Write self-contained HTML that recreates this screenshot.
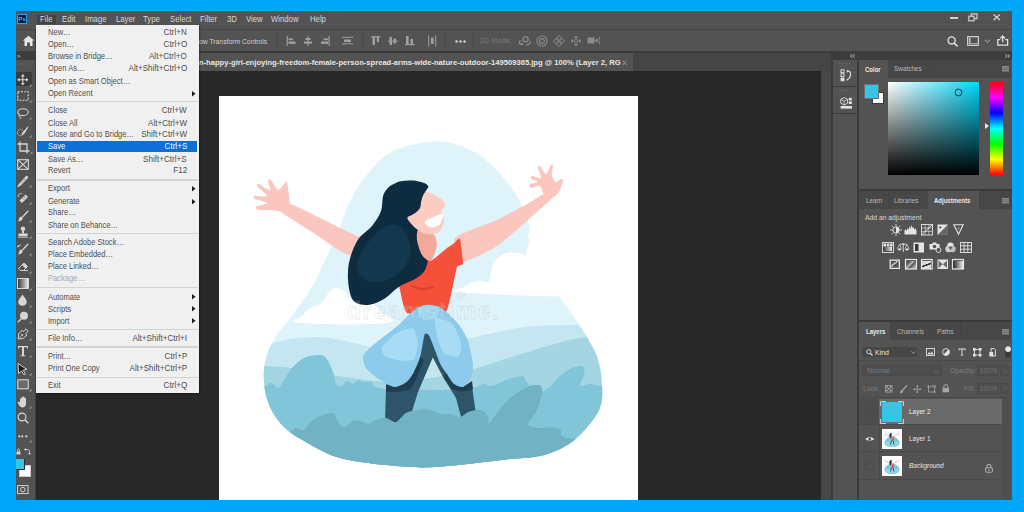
<!DOCTYPE html>
<html><head><meta charset="utf-8">
<style>
*{margin:0;padding:0;box-sizing:border-box}
html,body{width:1024px;height:512px;overflow:hidden;background:#00a7f8;font-family:"Liberation Sans",sans-serif;position:relative}
.a{position:absolute}
.t{position:absolute;white-space:nowrap}
svg{overflow:visible}
</style></head><body>
<div class="a" style="left:16.00px;top:11.00px;width:995.50px;height:489.20px;background:#535353;"></div>
<div class="a" style="left:16.00px;top:28.60px;width:995.50px;height:1.00px;background:#464646;"></div>
<div class="a" style="left:16.80px;top:14.40px;width:10.00px;height:9.40px;background:#001e36;border:1px solid #2f9fe8;"></div>
<div class="t" style="top:16.00px;font-size:6.2px;line-height:6.2px;color:#45b0f5;font-weight:700;left:18.20px;">Ps</div>
<div class="a" style="left:36.60px;top:14.70px;width:19.30px;height:9.80px;background:#444444;"></div>
<div class="t" style="top:15.00px;font-size:8.6px;line-height:8.6px;color:#d8d8d8;left:39.80px;transform:scaleX(0.9);transform-origin:left center;">File</div>
<div class="t" style="top:15.00px;font-size:8.6px;line-height:8.6px;color:#d8d8d8;left:61.70px;transform:scaleX(0.9);transform-origin:left center;">Edit</div>
<div class="t" style="top:15.00px;font-size:8.6px;line-height:8.6px;color:#d8d8d8;left:84.60px;transform:scaleX(0.9);transform-origin:left center;">Image</div>
<div class="t" style="top:15.00px;font-size:8.6px;line-height:8.6px;color:#d8d8d8;left:115.60px;transform:scaleX(0.9);transform-origin:left center;">Layer</div>
<div class="t" style="top:15.00px;font-size:8.6px;line-height:8.6px;color:#d8d8d8;left:143.40px;transform:scaleX(0.9);transform-origin:left center;">Type</div>
<div class="t" style="top:15.00px;font-size:8.6px;line-height:8.6px;color:#d8d8d8;left:169.60px;transform:scaleX(0.9);transform-origin:left center;">Select</div>
<div class="t" style="top:15.00px;font-size:8.6px;line-height:8.6px;color:#d8d8d8;left:199.70px;transform:scaleX(0.9);transform-origin:left center;">Filter</div>
<div class="t" style="top:15.00px;font-size:8.6px;line-height:8.6px;color:#d8d8d8;left:226.80px;transform:scaleX(0.9);transform-origin:left center;">3D</div>
<div class="t" style="top:15.00px;font-size:8.6px;line-height:8.6px;color:#d8d8d8;left:246.00px;transform:scaleX(0.9);transform-origin:left center;">View</div>
<div class="t" style="top:15.00px;font-size:8.6px;line-height:8.6px;color:#d8d8d8;left:271.20px;transform:scaleX(0.9);transform-origin:left center;">Window</div>
<div class="t" style="top:15.00px;font-size:8.6px;line-height:8.6px;color:#d8d8d8;left:309.50px;transform:scaleX(0.9);transform-origin:left center;">Help</div>
<div class="a" style="left:945.40px;top:11.50px;width:66.10px;height:11.30px;background:#535353;border-left:1px solid #4d4d4d;border-bottom:1px solid #4d4d4d"></div>
<div class="a" style="left:963.50px;top:11.50px;width:1.00px;height:11.30px;background:#4d4d4d;"></div>
<div class="a" style="left:981.50px;top:11.50px;width:1.00px;height:11.30px;background:#4d4d4d;"></div>
<div class="a" style="left:950.30px;top:17.40px;width:7.30px;height:2.10px;background:#cfcfcf;"></div>
<svg class="a" style="left:967.50px;top:13.00px;" width="10" height="8.5" viewBox="0 0 10 8.5"><rect x="0.8" y="3.2" width="5.2" height="4.6" fill="none" stroke="#cfcfcf" stroke-width="1.2"/><path d="M3.2 3.2V0.8h5.8v4.8H6" fill="none" stroke="#cfcfcf" stroke-width="1.2"/></svg>
<svg class="a" style="left:993.00px;top:14.00px;" width="7.5" height="6.5" viewBox="0 0 7.5 6.5"><path d="M0.6 0.6L6.9 5.9M6.9 0.6L0.6 5.9" stroke="#d4d4d4" stroke-width="1.3"/></svg>
<svg class="a" style="left:22.00px;top:34.50px;" width="13" height="12" viewBox="0 0 13 12"><path d="M6.5 0.8L12.2 5.6H10.5V11H8V7.6H5V11H2.5V5.6H0.8Z" fill="#e6e6e6"/></svg>
<div class="a" style="left:35.00px;top:29.60px;width:1.00px;height:21.40px;background:#3f3f3f;"></div>
<div class="t" style="top:38.00px;font-size:7.8px;line-height:7.8px;color:#cfcfcf;left:198.90px;transform:scaleX(0.87);transform-origin:left center;">ow Transform Controls</div>
<div class="a" style="left:277.30px;top:33.00px;width:1.00px;height:15.50px;background:#494949;"></div>
<div class="a" style="left:361.50px;top:33.00px;width:1.00px;height:15.50px;background:#494949;"></div>
<div class="a" style="left:445.30px;top:33.00px;width:1.00px;height:15.50px;background:#494949;"></div>
<div class="a" style="left:473.40px;top:33.00px;width:1.00px;height:15.50px;background:#494949;"></div>
<svg class="a" style="left:286.00px;top:35.00px;" width="12" height="12" viewBox="0 0 12 12"><rect x="0.6" y="0.8" width="1.2" height="10" fill="#a0a0a0"/><rect x="2.5" y="3.4" width="4.5" height="1.8" fill="#a0a0a0"/><rect x="2.5" y="6.5" width="7" height="2.4" fill="#a0a0a0"/></svg>
<svg class="a" style="left:303.00px;top:35.00px;" width="12" height="12" viewBox="0 0 12 12"><rect x="4.4" y="0.8" width="1.2" height="10" fill="#a0a0a0"/><rect x="2.5" y="3" width="5" height="2" fill="#a0a0a0"/><rect x="1" y="6.5" width="8" height="2.2" fill="#a0a0a0"/></svg>
<svg class="a" style="left:320.00px;top:35.00px;" width="12" height="12" viewBox="0 0 12 12"><rect x="8.5" y="0.8" width="1.2" height="10" fill="#a0a0a0"/><rect x="3.5" y="3.4" width="4.5" height="1.8" fill="#a0a0a0"/><rect x="1" y="6.5" width="7" height="2.4" fill="#a0a0a0"/></svg>
<svg class="a" style="left:341.00px;top:35.00px;" width="13" height="12" viewBox="0 0 13 12"><rect x="1" y="1.8" width="11" height="1" fill="#a0a0a0"/><rect x="3" y="4.5" width="7" height="2.6" fill="#a0a0a0"/><rect x="1" y="8.3" width="11" height="1" fill="#a0a0a0"/></svg>
<svg class="a" style="left:370.00px;top:35.00px;" width="12" height="12" viewBox="0 0 12 12"><rect x="1" y="1.2" width="9.5" height="1.2" fill="#a0a0a0"/><rect x="2.5" y="2" width="2.5" height="8" fill="#a0a0a0"/><rect x="6.8" y="2" width="2.2" height="5" fill="#a0a0a0"/></svg>
<svg class="a" style="left:387.00px;top:35.00px;" width="12" height="12" viewBox="0 0 12 12"><rect x="1" y="5.6" width="10" height="1" fill="#a0a0a0"/><rect x="2.5" y="2" width="2.5" height="8" fill="#a0a0a0"/><rect x="6.5" y="3.5" width="2.5" height="5" fill="#a0a0a0"/></svg>
<svg class="a" style="left:404.00px;top:35.00px;" width="12" height="12" viewBox="0 0 12 12"><rect x="1" y="9" width="9.5" height="1.2" fill="#a0a0a0"/><rect x="2" y="1" width="2.6" height="8" fill="#a0a0a0"/><rect x="6.5" y="4" width="2.5" height="5" fill="#a0a0a0"/></svg>
<svg class="a" style="left:427.00px;top:35.00px;" width="12" height="12" viewBox="0 0 12 12"><rect x="1.2" y="0.5" width="1" height="11" fill="#a0a0a0"/><rect x="8.2" y="0.5" width="1" height="11" fill="#a0a0a0"/><rect x="4" y="2.5" width="2.6" height="6.5" fill="#a0a0a0"/></svg>
<svg class="a" style="left:455.10px;top:39.50px;" width="3" height="3" viewBox="0 0 3 3"><circle cx="1.5" cy="1.5" r="1.25" fill="#d2d2d2"/></svg>
<svg class="a" style="left:459.10px;top:39.50px;" width="3" height="3" viewBox="0 0 3 3"><circle cx="1.5" cy="1.5" r="1.25" fill="#d2d2d2"/></svg>
<svg class="a" style="left:463.10px;top:39.50px;" width="3" height="3" viewBox="0 0 3 3"><circle cx="1.5" cy="1.5" r="1.25" fill="#d2d2d2"/></svg>
<div class="t" style="top:38.00px;font-size:6.9px;line-height:6.9px;color:#7c7c7c;letter-spacing:0.35px;left:479.80px;">3D Mode:</div>
<svg class="a" style="left:518.00px;top:34.50px;" width="14" height="12" viewBox="0 0 14 12"><circle cx="7.5" cy="4.2" r="2.6" fill="none" stroke="#8c8c8c" stroke-width="1.2"/><path d="M3 5.5C0 7 1 10 5 9.5M8 10C11 10 13 8 12 6" fill="none" stroke="#8c8c8c" stroke-width="1.1"/><path d="M2 9l3-1.5v3z" fill="#8c8c8c"/></svg>
<svg class="a" style="left:535.50px;top:34.50px;" width="12" height="12" viewBox="0 0 12 12"><circle cx="6" cy="6" r="5" fill="none" stroke="#8c8c8c" stroke-width="1.1"/><circle cx="6" cy="6" r="2.4" fill="none" stroke="#8c8c8c" stroke-width="1.1"/></svg>
<svg class="a" style="left:553.00px;top:34.50px;" width="12" height="12" viewBox="0 0 12 12"><path d="M6 0.5L8.5 3 6 5.5 3.5 3zM6 6.5L8.5 9 6 11.5 3.5 9zM0.5 6L3 3.5 5.5 6 3 8.5zM6.5 6L9 3.5 11.5 6 9 8.5z" fill="none" stroke="#8c8c8c" stroke-width="1"/></svg>
<svg class="a" style="left:569.50px;top:34.50px;" width="12" height="12" viewBox="0 0 12 12"><circle cx="6" cy="6" r="1.8" fill="none" stroke="#8c8c8c" stroke-width="1"/><path d="M6 0.5l2 2.5H4zM6 11.5l2-2.5H4zM0.5 6l2.5 2V4zM11.5 6l-2.5 2V4z" fill="#8c8c8c"/></svg>
<svg class="a" style="left:586.50px;top:36.00px;" width="14" height="10" viewBox="0 0 14 10"><rect x="0.5" y="1.5" width="7" height="6" fill="#8c8c8c"/><path d="M7.5 4.5l3-2.5v5z" fill="#8c8c8c"/><path d="M13 0.5Q10.5 4.5 13 8.5" fill="none" stroke="#8c8c8c" stroke-width="1"/></svg>
<svg class="a" style="left:947.00px;top:36.00px;" width="12" height="11" viewBox="0 0 12 11"><circle cx="4.6" cy="4.4" r="3.6" fill="none" stroke="#e0e0e0" stroke-width="1.3"/><path d="M7.3 7.1L10.6 10.4" stroke="#e0e0e0" stroke-width="1.5"/></svg>
<svg class="a" style="left:966.50px;top:36.00px;" width="12" height="10" viewBox="0 0 12 10"><rect x="0.7" y="0.7" width="10.6" height="8.6" fill="none" stroke="#e0e0e0" stroke-width="1.1"/><rect x="2.2" y="2" width="1.2" height="6" fill="#e0e0e0"/><rect x="3.4" y="7.2" width="6.8" height="0.9" fill="#bbb"/></svg>
<svg class="a" style="left:983.50px;top:39.00px;" width="7" height="4" viewBox="0 0 7 4"><path d="M0.8 0.8L3.5 3.2 6.2 0.8" fill="none" stroke="#bdbdbd" stroke-width="0.9"/></svg>
<svg class="a" style="left:996.80px;top:34.80px;" width="12" height="11" viewBox="0 0 12 11"><path d="M3.2 4.6H0.8V10.2H10.6V4.6H8.2" fill="none" stroke="#e0e0e0" stroke-width="1.3"/><path d="M5.7 7.3V1.2M3.4 3.4L5.7 1 8 3.4" fill="none" stroke="#e0e0e0" stroke-width="1.3"/></svg>
<div class="a" style="left:16.00px;top:51.00px;width:995.50px;height:1.50px;background:#3c3c3c;"></div>
<div class="a" style="left:36.00px;top:52.50px;width:795.00px;height:18.00px;background:#454545;"></div>
<div class="a" style="left:36.00px;top:52.50px;width:596.70px;height:18.00px;background:#535353;"></div>
<div class="t" style="top:59.00px;font-size:7.62px;line-height:7.62px;color:#e6e6e6;font-weight:700;left:198.90px;">n-happy-girl-enjoying-freedom-female-person-spread-arms-wide-nature-outdoor-149509365.jpg @ 100% (Layer 2, RG</div>
<svg class="a" style="left:622.00px;top:59.50px;" width="5" height="6" viewBox="0 0 5 6"><path d="M0.5 0.5L4.5 5M4.5 0.5L0.5 5" stroke="#aaaaaa" stroke-width="0.8"/></svg>
<div class="a" style="left:36.00px;top:70.50px;width:785.00px;height:429.70px;background:#282828;"></div>
<div class="a" style="left:821.00px;top:70.50px;width:10.00px;height:429.70px;background:#474747;"></div>
<div class="a" style="left:16.00px;top:52.50px;width:20.00px;height:447.70px;background:#535353;"></div>
<div class="a" style="left:16.00px;top:52.50px;width:20.00px;height:7.30px;background:#3d3d3d;"></div>
<div class="a" style="left:34.80px;top:52.50px;width:1.20px;height:447.70px;background:#3e3e3e;"></div>
<div class="a" style="left:219.30px;top:95.50px;width:418.40px;height:404.70px;background:#ffffff;"></div>
<svg class="a" style="left:0;top:0" width="1024" height="512" viewBox="0 0 1024 512"><g clip-path="url(#dc)"><defs><clipPath id="dc"><rect x="219.3" y="95.5" width="418.4" height="405"/></clipPath></defs><defs><clipPath id="bc"><path d="M436.0 141.5C449.2 141.1 460.4 145.3 470.4 150.0C480.4 154.7 488.1 161.5 496.0 169.4C503.9 177.3 512.2 188.4 517.6 197.3C523.0 206.2 525.8 215.1 528.4 223.0C531.0 230.9 530.2 237.5 533.0 245.0C535.8 252.5 541.0 260.0 545.0 268.0C549.0 276.0 551.5 283.8 557.0 293.0C562.5 302.2 571.4 312.6 578.0 323.0C584.6 333.4 592.5 345.1 596.5 355.5C600.5 365.9 601.6 376.5 602.0 385.6C602.4 394.7 602.7 401.8 599.0 410.0C595.3 418.2 586.3 428.4 580.0 434.8C573.7 441.2 568.3 444.8 561.0 448.4C553.7 452.0 545.7 454.8 536.4 456.6C527.1 458.5 518.9 458.0 505.0 459.5C491.1 461.0 468.3 464.2 452.8 465.5C437.3 466.8 430.1 468.1 412.0 467.0C393.9 465.9 361.7 463.2 344.0 459.0C326.3 454.8 316.5 447.8 306.0 442.0C295.5 436.2 287.5 431.2 281.0 424.0C274.5 416.8 269.8 408.2 267.0 399.0C264.2 389.8 263.2 378.3 264.0 369.0C264.8 359.7 267.7 351.5 272.0 343.0C276.3 334.5 283.3 327.3 290.0 318.0C296.7 308.7 306.0 297.0 312.0 287.0C318.0 277.0 321.4 267.5 326.0 258.0C330.6 248.5 335.6 238.7 339.3 230.0C343.0 221.3 344.1 214.3 348.0 206.0C351.9 197.7 355.8 189.0 363.0 180.0C370.2 171.0 378.8 158.6 391.0 152.2C403.2 145.8 422.8 141.9 436.0 141.5Z"/></clipPath></defs><path d="M436.0 141.5C449.2 141.1 460.4 145.3 470.4 150.0C480.4 154.7 488.1 161.5 496.0 169.4C503.9 177.3 512.2 188.4 517.6 197.3C523.0 206.2 525.8 215.1 528.4 223.0C531.0 230.9 530.2 237.5 533.0 245.0C535.8 252.5 541.0 260.0 545.0 268.0C549.0 276.0 551.5 283.8 557.0 293.0C562.5 302.2 571.4 312.6 578.0 323.0C584.6 333.4 592.5 345.1 596.5 355.5C600.5 365.9 601.6 376.5 602.0 385.6C602.4 394.7 602.7 401.8 599.0 410.0C595.3 418.2 586.3 428.4 580.0 434.8C573.7 441.2 568.3 444.8 561.0 448.4C553.7 452.0 545.7 454.8 536.4 456.6C527.1 458.5 518.9 458.0 505.0 459.5C491.1 461.0 468.3 464.2 452.8 465.5C437.3 466.8 430.1 468.1 412.0 467.0C393.9 465.9 361.7 463.2 344.0 459.0C326.3 454.8 316.5 447.8 306.0 442.0C295.5 436.2 287.5 431.2 281.0 424.0C274.5 416.8 269.8 408.2 267.0 399.0C264.2 389.8 263.2 378.3 264.0 369.0C264.8 359.7 267.7 351.5 272.0 343.0C276.3 334.5 283.3 327.3 290.0 318.0C296.7 308.7 306.0 297.0 312.0 287.0C318.0 277.0 321.4 267.5 326.0 258.0C330.6 248.5 335.6 238.7 339.3 230.0C343.0 221.3 344.1 214.3 348.0 206.0C351.9 197.7 355.8 189.0 363.0 180.0C370.2 171.0 378.8 158.6 391.0 152.2C403.2 145.8 422.8 141.9 436.0 141.5Z" fill="#dff3fa" /><g clip-path="url(#bc)"><path d="M300.0 323.0C283.2 321.4 301.0 318.0 303.0 315.0C305.0 312.0 307.0 310.0 310.0 308.0C313.0 306.0 315.2 306.6 318.0 305.0C320.8 303.4 321.6 302.8 324.0 300.0C326.4 297.2 327.4 293.4 330.0 291.0C332.6 288.6 334.0 287.8 337.0 288.0C340.0 288.2 342.4 289.8 345.0 292.0C347.6 294.2 347.0 297.0 350.0 299.0C353.0 301.0 355.6 301.0 360.0 302.0C364.4 303.0 367.6 302.0 372.0 304.0C376.4 306.0 379.0 308.2 382.0 312.0C385.0 315.8 403.4 320.8 387.0 323.0C370.6 325.2 316.8 324.6 300.0 323.0Z" fill="#ffffff" /><path d="M300.0 323.0 L387.0 323.0 L387.0 320.0 L300.0 320.0Z" fill="#ffffff" /><path d="M461.0 292.5C440.6 291.7 462.6 288.5 464.0 287.0C465.4 285.5 468.2 283.7 470.6 282.8C473.0 281.9 477.3 281.4 480.0 281.2C482.7 281.1 487.1 282.7 488.6 282.0C490.1 281.3 489.2 279.5 490.0 276.6C490.8 273.7 492.2 265.8 494.0 262.5C495.8 259.2 499.2 256.2 502.0 254.7C504.8 253.2 509.8 252.4 512.8 252.3C515.8 252.2 520.1 253.4 522.0 253.9C523.9 254.4 524.6 256.3 525.3 255.5C526.0 254.7 526.2 250.6 526.9 248.4C527.6 246.2 529.3 242.5 530.0 240.6C530.7 238.7 530.1 237.3 531.6 236.0C533.1 234.7 529.7 231.4 540.0 232.0C550.3 232.6 591.0 230.9 600.0 240.0C609.0 249.1 620.9 284.6 600.0 292.5C579.1 300.4 481.4 293.3 461.0 292.5Z" fill="#ffffff" /><path d="M250.0 350.0C252.0 332.1 259.7 347.5 265.0 346.0C270.3 344.5 282.7 340.2 290.0 339.0C297.3 337.8 312.0 336.6 320.0 337.0C328.0 337.4 342.0 340.4 350.0 342.0C358.0 343.6 370.7 347.7 380.0 349.0C389.3 350.3 407.9 353.5 420.0 352.0C432.1 350.5 457.9 341.2 471.0 338.0C484.1 334.8 507.7 329.7 518.0 328.0C528.3 326.3 539.7 325.9 548.0 325.5C556.3 325.1 567.7 325.1 580.0 325.0C592.3 324.9 632.0 304.3 640.0 325.0C648.0 345.7 692.0 459.3 640.0 480.0C588.0 500.7 302.0 497.3 250.0 480.0C198.0 462.7 248.0 367.9 250.0 350.0Z" fill="#c3e6f0" /><path d="M250.0 368.0C252.0 352.8 258.3 365.9 265.0 366.0C271.7 366.1 291.2 367.8 300.0 369.0C308.8 370.2 319.4 373.3 331.0 375.0C342.6 376.7 373.8 381.6 387.0 382.0C400.2 382.4 418.8 379.6 430.0 378.0C441.2 376.4 459.3 373.1 471.0 370.0C482.7 366.9 506.4 358.6 518.0 355.0C529.6 351.4 549.6 345.3 558.0 343.0C566.4 340.7 570.1 339.1 581.0 338.0C591.9 336.9 632.1 316.1 640.0 335.0C647.9 353.9 692.0 460.7 640.0 480.0C588.0 499.3 302.0 494.9 250.0 480.0C198.0 465.1 248.0 383.2 250.0 368.0Z" fill="#a4d5e3" /><path d="M255.0 395.0C256.8 379.3 263.2 388.0 266.0 386.0C268.8 384.0 270.0 382.7 272.0 383.0C274.0 383.3 276.0 388.5 278.0 388.0C280.0 387.5 281.7 383.3 284.0 380.0C286.3 376.7 288.7 371.7 292.0 368.0C295.3 364.3 299.7 360.2 304.0 358.0C308.3 355.8 314.3 355.0 318.0 355.0C321.7 355.0 323.5 355.2 326.0 358.0C328.5 360.8 331.3 367.7 333.0 372.0C334.7 376.3 334.5 381.7 336.0 384.0C337.5 386.3 340.2 386.5 342.0 386.0C343.8 385.5 345.2 381.3 347.0 381.0C348.8 380.7 351.2 384.2 353.0 384.0C354.8 383.8 356.2 380.3 358.0 380.0C359.8 379.7 361.7 381.7 364.0 382.0C366.3 382.3 369.3 381.0 372.0 382.0C374.7 383.0 368.7 386.7 380.0 388.0C391.3 389.3 425.8 389.7 440.0 390.0C454.2 390.3 459.6 390.2 465.0 390.0C470.4 389.8 469.4 389.8 472.5 388.8C475.6 387.8 480.5 384.5 483.4 384.0C486.3 383.5 487.6 386.0 490.0 386.0C492.4 386.0 494.7 385.1 497.5 384.0C500.3 382.9 502.8 380.7 507.0 379.4C511.2 378.1 519.2 375.7 522.5 376.2C525.8 376.8 524.9 379.9 527.0 382.5C529.1 385.1 531.6 391.0 535.0 392.0C538.4 393.0 543.3 391.4 547.5 388.8C551.7 386.1 555.9 379.5 560.0 376.0C564.1 372.5 568.2 369.6 572.0 368.0C575.8 366.4 580.8 365.3 582.8 366.4C584.8 367.5 584.5 371.4 584.0 374.6C583.5 377.8 578.8 384.0 580.0 385.6C581.2 387.2 587.3 383.9 591.0 384.0C594.7 384.1 593.8 385.8 602.0 386.0C610.2 386.2 633.7 369.3 640.0 385.0C646.3 400.7 704.2 464.2 640.0 480.0C575.8 495.8 319.2 494.2 255.0 480.0C190.8 465.8 253.2 410.7 255.0 395.0Z" fill="#81c5d9" /><path d="M255.0 445.0C259.9 437.9 281.9 435.6 288.0 433.0C294.1 430.4 293.6 428.4 296.0 428.0C298.4 427.6 301.4 431.2 304.0 430.0C306.6 428.8 309.7 422.4 313.0 420.0C316.3 417.6 322.9 414.9 326.0 414.0C329.1 413.1 332.2 412.8 334.0 414.0C335.8 415.2 336.5 419.9 338.0 422.0C339.5 424.1 341.9 428.0 344.0 428.0C346.1 428.0 349.6 423.1 352.0 422.0C354.4 420.9 357.6 420.7 360.0 421.0C362.4 421.3 365.6 424.1 368.0 424.0C370.4 423.9 373.3 420.9 376.0 420.0C378.7 419.1 383.0 417.7 386.0 418.0C389.0 418.3 393.0 422.8 396.0 422.0C399.0 421.2 402.7 414.8 406.0 413.0C409.3 411.2 414.4 410.4 418.0 410.0C421.6 409.6 426.7 409.4 430.0 410.0C433.3 410.6 437.0 413.4 440.0 414.0C443.0 414.6 447.0 413.6 450.0 414.0C453.0 414.4 457.1 417.3 460.0 416.9C462.9 416.5 466.1 412.3 469.4 411.4C472.7 410.5 479.1 409.8 481.9 410.6C484.7 411.4 486.8 415.0 488.0 416.9C489.2 418.8 486.9 425.3 489.7 423.0C492.5 420.7 501.3 406.6 506.9 401.2C512.5 395.9 522.3 389.5 527.2 387.2C532.1 384.9 537.5 384.7 539.7 385.6C541.9 386.5 542.5 389.6 542.0 393.4C541.5 397.1 538.7 406.0 536.6 410.6C534.5 415.2 528.0 421.4 528.0 424.0C528.0 426.6 533.7 427.2 536.6 427.8C539.5 428.4 544.0 427.6 547.5 427.8C551.0 428.0 557.5 428.0 560.0 429.4C562.5 430.8 558.0 434.9 564.0 437.2C570.0 439.5 594.6 438.6 600.0 445.0C605.4 451.4 651.8 474.8 600.0 480.0C548.2 485.2 306.8 485.2 255.0 480.0C203.2 474.8 250.1 452.1 255.0 445.0Z" fill="#72b2c5" /></g><path d="M540.0 293.0 L640.0 293.0 L640.0 100.0 L560.0 100.0 L528.0 236.0 L542.0 268.0 L555.0 293.0Z" fill="#ffffff" /><path d="M288.0 203.0C292.0 203.7 313.1 214.7 320.0 218.0C326.9 221.3 350.5 233.3 357.0 236.0C363.5 238.7 382.5 242.4 385.0 245.0C387.5 247.6 385.9 261.1 382.0 262.0C378.1 262.9 353.0 257.0 346.0 254.0C339.0 251.0 318.6 236.3 312.0 232.0C305.4 227.7 282.4 213.9 280.0 211.0C277.6 208.1 284.0 202.3 288.0 203.0Z" fill="#fac6bd" /><path d="M287.0 182.0C287.7 183.6 288.7 192.9 289.0 196.0C289.3 199.1 290.1 203.0 289.0 205.0C287.9 207.0 283.3 210.3 281.0 211.0C278.7 211.7 274.9 210.1 272.0 210.0C269.1 209.9 261.1 210.4 259.0 210.0C256.9 209.6 254.9 207.9 256.0 207.0C257.1 206.1 267.1 204.1 267.0 203.0C266.9 201.9 256.7 199.9 255.0 199.0C253.3 198.1 252.4 196.4 254.0 196.0C255.6 195.6 266.5 197.2 267.0 196.0C267.5 194.8 259.2 188.6 258.0 187.0C256.8 185.4 256.4 183.6 258.0 184.0C259.6 184.4 268.7 190.4 270.0 190.0C271.3 189.6 267.9 182.3 268.0 181.0C268.1 179.7 269.7 178.8 271.0 180.0C272.3 181.2 276.3 189.5 278.0 190.0C279.7 190.5 282.8 185.1 284.0 184.0C285.2 182.9 286.3 180.4 287.0 182.0Z" fill="#fac6bd" /><path d="M455.0 238.0C458.5 233.8 489.8 223.4 497.0 220.0C504.2 216.6 522.3 206.6 527.0 204.0C531.7 201.4 541.4 194.7 544.0 194.0C546.6 193.3 554.4 194.6 553.0 197.0C551.6 199.4 535.6 213.1 530.0 218.0C524.4 222.9 503.8 241.6 497.0 246.0C490.2 250.4 466.2 262.8 462.0 262.0C457.8 261.2 451.5 242.2 455.0 238.0Z" fill="#fac6bd" /><path d="M544.0 194.0C542.3 192.5 541.7 186.8 540.0 186.0C538.3 185.2 532.3 188.3 531.0 188.0C529.7 187.7 529.1 184.8 530.0 184.0C530.9 183.2 537.9 182.7 538.0 182.0C538.1 181.3 531.8 179.8 531.0 179.0C530.2 178.2 530.7 176.1 532.0 176.0C533.3 175.9 540.2 179.1 541.0 178.0C541.8 176.9 538.1 169.6 538.0 168.0C537.9 166.4 538.9 165.2 540.0 166.0C541.1 166.8 544.5 174.1 546.0 174.0C547.5 173.9 550.1 166.1 551.0 165.0C551.9 163.9 552.9 164.5 553.0 166.0C553.1 167.5 551.6 173.9 552.0 176.0C552.4 178.1 554.8 181.6 556.0 182.0C557.2 182.4 560.1 179.1 561.0 179.0C561.9 178.9 563.3 179.3 563.0 181.0C562.7 182.7 560.3 189.9 559.0 192.0C557.7 194.1 555.0 196.7 553.0 197.0C551.0 197.3 545.7 195.5 544.0 194.0Z" fill="#fac6bd" /><path d="M416.0 250.0C417.0 249.4 421.0 251.3 422.0 252.0C423.0 252.7 429.1 261.3 430.8 261.0C432.5 260.7 445.4 249.2 447.0 248.0C448.6 246.8 453.3 243.8 454.2 243.2C455.1 242.6 459.4 237.4 460.0 238.8C460.6 240.2 463.2 261.8 463.0 263.7C462.8 265.6 457.7 264.9 457.0 266.7C456.3 268.5 452.8 286.9 452.0 290.0C451.2 293.1 448.0 311.5 445.0 313.0C442.0 314.5 410.0 314.5 407.0 313.0C404.0 311.5 400.6 292.3 400.0 290.0C399.4 287.7 398.1 280.3 398.6 278.4C399.1 276.5 406.2 262.7 407.4 260.8C408.6 258.9 415.0 250.6 416.0 250.0Z" fill="#f5503a" /><path d="M411 285.5Q422 292 434 286.5" stroke="#dc412d" stroke-width="2.2" fill="none"/><path d="M419.0 181.7C424.4 182.2 427.0 184.3 428.0 186.0C429.0 187.7 426.0 187.8 425.0 192.0C424.0 196.2 424.0 204.5 422.0 211.0C420.0 217.5 413.0 226.2 413.0 231.0C413.0 235.8 419.5 236.0 422.0 240.0C424.5 244.0 427.5 250.0 428.0 255.0C428.5 260.0 427.0 266.1 425.0 270.0C423.0 273.9 420.4 275.6 416.0 278.4C411.6 281.2 403.9 283.6 398.6 287.0C393.3 290.4 388.9 296.1 384.0 299.0C379.1 301.9 374.2 304.2 369.3 304.7C364.4 305.2 358.0 304.8 354.6 301.8C351.2 298.9 349.8 293.4 348.8 287.0C347.8 280.6 347.3 271.5 348.8 263.7C350.3 255.9 353.7 246.6 357.6 240.3C361.5 234.0 368.3 230.6 372.2 225.7C376.1 220.8 379.0 216.4 381.0 211.0C383.0 205.6 381.6 198.0 384.0 193.4C386.4 188.8 389.9 185.1 395.7 183.2C401.5 181.2 413.6 181.2 419.0 181.7Z" fill="#0e2c3f" /><path d="M378.0 231.5C385.5 225.1 392.7 223.0 398.6 225.7C404.5 228.4 409.2 238.5 410.3 246.0C411.4 253.5 409.2 260.2 404.4 266.7C399.6 273.2 391.5 279.2 384.0 281.3C376.5 283.4 368.2 282.2 363.4 278.4C358.6 274.6 354.9 269.4 357.6 260.8C360.3 252.2 370.5 237.9 378.0 231.5Z" fill="#13374e" /><path d="M408.0 212.0 L426.0 212.0 L428.0 246.0 L410.0 246.0Z" fill="#0e2c3f" /><path d="M419.0 228.6C421.2 227.9 431.3 232.1 433.7 234.4C436.1 236.7 437.1 242.5 436.7 246.0C436.3 249.5 432.8 259.6 430.8 260.8C428.8 262.0 423.8 257.8 422.0 255.0C420.2 252.2 417.4 243.5 417.0 240.0C416.6 236.5 416.8 229.3 419.0 228.6Z" fill="#f3a89a" /><path d="M425.0 192.0C427.9 190.9 436.5 195.9 439.6 197.8C442.7 199.8 445.2 203.0 445.4 205.0C445.6 207.0 441.2 208.8 441.0 211.0C440.8 213.2 444.2 216.7 444.0 219.8C443.8 222.9 442.0 229.3 439.6 231.5C437.2 233.7 431.5 234.8 428.0 234.4C424.5 234.0 419.1 231.0 416.0 228.6C412.9 226.2 407.8 220.5 407.4 218.3C407.0 216.1 411.3 216.0 413.2 214.0C415.1 212.0 418.2 208.3 420.0 205.0C421.8 201.7 422.1 193.1 425.0 192.0Z" fill="#fccbc1" /><path d="M425.0 221.3C426.5 219.5 440.5 213.6 442.5 214.0C444.5 214.4 441.5 222.4 440.0 224.2C438.5 226.0 433.0 227.9 431.0 227.5C429.0 227.1 423.5 223.1 425.0 221.3Z" fill="#ffffff" /><path d="M395.7 183.2C399.0 180.6 406.1 180.8 410.0 180.5C413.9 180.2 416.0 180.8 419.0 181.7C422.0 182.6 427.0 184.3 428.0 186.0C429.0 187.7 426.2 189.7 425.0 192.0C423.8 194.3 421.8 197.3 421.0 200.0C420.2 202.7 421.3 205.7 420.0 208.0C418.7 210.3 415.3 213.7 413.0 214.0C410.7 214.3 408.2 212.3 406.0 210.0C403.8 207.7 402.7 202.3 400.0 200.0C397.3 197.7 390.7 198.8 390.0 196.0C389.3 193.2 392.4 185.8 395.7 183.2Z" fill="#0e2c3f" /><path d="M424.7 333.0 L436.0 350.0 L418.0 392.0 L409.0 421.0 L385.0 424.0 L386.0 388.0 L405.0 352.0Z" fill="#2d5468" /><path d="M424.7 333.0 L438.0 337.0 L450.0 368.0 L463.0 388.0 L472.0 386.0 L476.0 414.7 L461.3 417.7 L456.0 398.0 L443.0 377.0 L430.0 352.0Z" fill="#2d5468" /><path d="M386.0 384.0 L394.0 387.0 L406.0 383.0 L413.0 374.0 L420.0 357.0 L424.0 360.0 L416.0 380.0 L410.0 390.0 L398.0 392.0 L386.0 392.0Z" fill="#1f3f50" /><path d="M446.0 373.0 L454.0 384.0 L463.0 387.0 L472.0 381.0 L473.0 389.0 L462.0 392.0 L452.0 389.0 L444.0 378.0Z" fill="#1f3f50" /><path d="M417.4 307.8C419.7 306.4 423.5 305.1 426.2 304.9C428.9 304.7 435.2 305.4 437.9 306.4C440.6 307.4 444.0 309.9 446.7 312.2C449.4 314.5 455.7 320.4 458.4 323.9C461.1 327.4 465.4 334.3 467.2 338.6C469.0 342.9 470.8 352.3 471.6 356.2C472.4 360.1 473.2 364.8 473.0 367.9C472.8 371.0 471.4 377.1 470.0 379.6C468.6 382.1 464.9 386.3 462.8 386.9C460.7 387.5 456.1 385.8 454.0 384.0C451.9 382.2 448.5 376.2 446.7 373.7C444.9 371.2 442.4 368.1 440.8 365.0C439.2 361.9 436.6 354.2 435.0 350.3C433.4 346.4 430.4 337.7 429.0 335.6C427.6 333.5 425.9 331.5 424.7 334.2C423.5 336.9 421.9 350.9 420.3 356.2C418.7 361.5 414.9 370.2 413.0 373.7C411.1 377.2 408.2 380.7 405.7 382.5C403.2 384.3 397.5 387.3 394.0 386.9C390.5 386.5 383.0 382.1 379.3 379.6C375.6 377.1 368.1 371.0 366.0 367.9C363.9 364.8 362.6 358.9 363.2 356.2C363.8 353.5 367.6 350.1 370.5 347.4C373.4 344.7 381.2 338.7 385.1 335.6C389.0 332.5 396.7 326.6 399.8 323.9C402.9 321.2 406.3 317.2 408.6 315.1C410.9 313.0 415.1 309.2 417.4 307.8Z" fill="#8ccbeb" /><path d="M382.0 347.4C383.2 345.1 393.9 334.6 397.0 332.7C400.1 330.8 411.0 327.4 413.0 328.3C415.0 329.2 417.3 338.4 417.4 341.5C417.5 344.6 416.2 357.1 414.4 359.0C412.6 360.9 402.7 360.8 399.8 360.5C396.9 360.2 386.8 357.3 385.0 356.0C383.2 354.7 380.8 349.7 382.0 347.4Z" fill="#a8dcf5" /><path d="M435.0 318.0C436.5 316.5 449.9 321.4 452.5 324.0C455.1 326.6 460.7 341.2 461.3 344.4C461.9 347.6 460.2 355.3 458.4 356.2C456.6 357.1 445.8 355.0 443.7 353.2C441.6 351.4 438.8 342.1 437.9 338.6C437.0 335.1 433.5 319.5 435.0 318.0Z" fill="#a8dcf5" /><path d="M418.0 309.0C418.5 307.0 425.1 305.1 428.0 305.0C430.9 304.9 438.9 306.3 440.0 308.0C441.1 309.7 438.1 316.4 436.0 318.0C433.9 319.6 426.4 321.2 424.0 320.0C421.6 318.8 417.5 311.0 418.0 309.0Z" fill="#a2d8f2" /><g clip-path="url(#bc)"><path d="M255.0 445.0C259.9 437.9 281.9 435.6 288.0 433.0C294.1 430.4 293.6 428.4 296.0 428.0C298.4 427.6 301.4 431.2 304.0 430.0C306.6 428.8 309.7 422.4 313.0 420.0C316.3 417.6 322.9 414.9 326.0 414.0C329.1 413.1 332.2 412.8 334.0 414.0C335.8 415.2 336.5 419.9 338.0 422.0C339.5 424.1 341.9 428.0 344.0 428.0C346.1 428.0 349.6 423.1 352.0 422.0C354.4 420.9 357.6 420.7 360.0 421.0C362.4 421.3 365.6 424.1 368.0 424.0C370.4 423.9 373.3 420.9 376.0 420.0C378.7 419.1 383.0 417.7 386.0 418.0C389.0 418.3 393.0 422.8 396.0 422.0C399.0 421.2 402.7 414.8 406.0 413.0C409.3 411.2 414.4 410.4 418.0 410.0C421.6 409.6 426.7 409.4 430.0 410.0C433.3 410.6 437.0 413.4 440.0 414.0C443.0 414.6 447.0 413.6 450.0 414.0C453.0 414.4 457.1 417.3 460.0 416.9C462.9 416.5 466.1 412.3 469.4 411.4C472.7 410.5 479.1 409.8 481.9 410.6C484.7 411.4 486.8 415.0 488.0 416.9C489.2 418.8 486.9 425.3 489.7 423.0C492.5 420.7 501.3 406.6 506.9 401.2C512.5 395.9 522.3 389.5 527.2 387.2C532.1 384.9 537.5 384.7 539.7 385.6C541.9 386.5 542.5 389.6 542.0 393.4C541.5 397.1 538.7 406.0 536.6 410.6C534.5 415.2 528.0 421.4 528.0 424.0C528.0 426.6 533.7 427.2 536.6 427.8C539.5 428.4 544.0 427.6 547.5 427.8C551.0 428.0 557.5 428.0 560.0 429.4C562.5 430.8 558.0 434.9 564.0 437.2C570.0 439.5 594.6 438.6 600.0 445.0C605.4 451.4 651.8 474.8 600.0 480.0C548.2 485.2 306.8 485.2 255.0 480.0C203.2 474.8 250.1 452.1 255.0 445.0Z" fill="#72b2c5" /></g><text x="347" y="319" font-family="Liberation Sans" font-weight="700" font-size="23" fill="#ffffff" fill-opacity="0.18" stroke="#9a9a9a" stroke-opacity="0.22" stroke-width="0.8" letter-spacing="1.6">dreamstime.</text><circle cx="461" cy="295" r="4" fill="none" stroke="#9a9a9a" stroke-opacity="0.2" stroke-width="0.8"/><circle cx="461" cy="295" r="2" fill="none" stroke="#9a9a9a" stroke-opacity="0.2" stroke-width="0.8"/></g></svg>
<div class="a" style="left:831.00px;top:52.50px;width:180.50px;height:447.70px;background:#3b3b3b;"></div>
<svg class="a" style="left:17.00px;top:62.50px;" width="13" height="2" viewBox="0 0 13 2"><path d="M0 1H13" stroke="#6a6a6a" stroke-width="1" stroke-dasharray="1 1"/></svg>
<svg class="a" style="left:16.80px;top:54.50px;" width="3.5" height="2.6" viewBox="0 0 3.5 2.6"><path d="M0.3 0.2L1.4 1.3 0.3 2.4M1.9 0.2L3 1.3 1.9 2.4" fill="none" stroke="#c8c8c8" stroke-width="0.7"/></svg>
<div class="a" style="left:16.00px;top:71.90px;width:15.90px;height:14.50px;background:#3c3c3c;"></div>
<svg class="a" style="left:16.50px;top:73.50px;" width="12" height="12" viewBox="0 0 12 12"><path d="M5.8 0.5V11M0.5 5.8H11" stroke="#d6d6d6" stroke-width="1.1"/><path d="M5.8 0.3L7.8 2.6H3.8zM5.8 11.3L7.8 9H3.8zM0.3 5.8L2.6 3.8V7.8zM11.3 5.8L9 3.8V7.8z" fill="#d6d6d6"/></svg>
<svg class="a" style="left:28.80px;top:83.50px;" width="2.5" height="2.5" viewBox="0 0 2.5 2.5"><path d="M2.5 0V2.5H0z" fill="#9a9a9a"/></svg>
<svg class="a" style="left:16.50px;top:91.00px;" width="12" height="10" viewBox="0 0 12 10"><rect x="0.8" y="0.8" width="10.4" height="8.4" fill="none" stroke="#d6d6d6" stroke-width="1.1" stroke-dasharray="2 1.2"/></svg>
<svg class="a" style="left:29.00px;top:100.00px;" width="2.5" height="2.5" viewBox="0 0 2.5 2.5"><path d="M2.5 0V2.5H0z" fill="#9a9a9a"/></svg>
<svg class="a" style="left:16.50px;top:108.00px;" width="12" height="12" viewBox="0 0 12 12"><ellipse cx="6" cy="4.2" rx="5.2" ry="3.4" fill="none" stroke="#d6d6d6" stroke-width="1.1"/><path d="M2.5 7C1.5 8 2 9 3.5 9.2 4.5 9.5 4 10.5 3 11" fill="none" stroke="#d6d6d6" stroke-width="1"/></svg>
<svg class="a" style="left:29.00px;top:117.00px;" width="2.5" height="2.5" viewBox="0 0 2.5 2.5"><path d="M2.5 0V2.5H0z" fill="#9a9a9a"/></svg>
<svg class="a" style="left:16.50px;top:125.50px;" width="12" height="11" viewBox="0 0 12 11"><circle cx="3.5" cy="6.5" r="3.2" fill="none" stroke="#d6d6d6" stroke-width="0.9" stroke-dasharray="1.2 0.8"/><path d="M11 0.8L6 6.5 4.8 8.6 7 7.6z" fill="#d6d6d6" stroke="#d6d6d6" stroke-width="1"/></svg>
<svg class="a" style="left:29.00px;top:134.50px;" width="2.5" height="2.5" viewBox="0 0 2.5 2.5"><path d="M2.5 0V2.5H0z" fill="#9a9a9a"/></svg>
<svg class="a" style="left:16.50px;top:140.50px;" width="13" height="13" viewBox="0 0 13 13"><path d="M3 0.5V10H12.5M0.5 3H10V12.5" fill="none" stroke="#d6d6d6" stroke-width="1.3"/></svg>
<svg class="a" style="left:29.50px;top:150.50px;" width="2.5" height="2.5" viewBox="0 0 2.5 2.5"><path d="M2.5 0V2.5H0z" fill="#9a9a9a"/></svg>
<svg class="a" style="left:16.50px;top:158.50px;" width="12" height="11" viewBox="0 0 12 11"><rect x="0.7" y="0.7" width="10.6" height="9.6" fill="none" stroke="#d6d6d6" stroke-width="1.1"/><path d="M0.7 0.7L11.3 10.3M11.3 0.7L0.7 10.3" stroke="#d6d6d6" stroke-width="1.1"/></svg>
<svg class="a" style="left:16.50px;top:174.50px;" width="12" height="12" viewBox="0 0 12 12"><path d="M10 0.8C11 1.2 11.5 2 11 3L9 5 7 3 9 1z" fill="#d6d6d6"/><path d="M7.6 3.6L2 9.5 1.2 11.2 3 10.5 8.6 4.6" fill="none" stroke="#d6d6d6" stroke-width="1.1"/></svg>
<svg class="a" style="left:29.00px;top:184.50px;" width="2.5" height="2.5" viewBox="0 0 2.5 2.5"><path d="M2.5 0V2.5H0z" fill="#9a9a9a"/></svg>
<svg class="a" style="left:16.50px;top:192.00px;" width="12" height="12" viewBox="0 0 12 12"><path d="M2.5 8.5L8.5 2.5 11 5 5 11z" fill="#d6d6d6"/><path d="M1 5C1 2 3 1 5 2" fill="none" stroke="#d6d6d6" stroke-width="0.9"/><path d="M5 5.5l2 2M6.5 4l2 2" stroke="#535353" stroke-width="0.7"/></svg>
<svg class="a" style="left:29.00px;top:202.00px;" width="2.5" height="2.5" viewBox="0 0 2.5 2.5"><path d="M2.5 0V2.5H0z" fill="#9a9a9a"/></svg>
<svg class="a" style="left:16.50px;top:209.50px;" width="12" height="12" viewBox="0 0 12 12"><path d="M11.3 0.8L5.5 7" stroke="#d6d6d6" stroke-width="1.3"/><path d="M4.8 6.6C3 6.5 2 8 2 9.5 1.8 10.5 1 11 0.5 11.3 3 11.5 5.5 10.5 5.8 8z" fill="#d6d6d6"/></svg>
<svg class="a" style="left:29.00px;top:219.50px;" width="2.5" height="2.5" viewBox="0 0 2.5 2.5"><path d="M2.5 0V2.5H0z" fill="#9a9a9a"/></svg>
<svg class="a" style="left:16.50px;top:226.00px;" width="12" height="12" viewBox="0 0 12 12"><circle cx="6" cy="2.8" r="2.2" fill="#d6d6d6"/><rect x="5" y="4.5" width="2" height="3" fill="#d6d6d6"/><path d="M1.5 7.5H10.5V10H1.5z" fill="#d6d6d6"/><rect x="1" y="10.6" width="10" height="1" fill="#d6d6d6"/></svg>
<svg class="a" style="left:29.00px;top:236.00px;" width="2.5" height="2.5" viewBox="0 0 2.5 2.5"><path d="M2.5 0V2.5H0z" fill="#9a9a9a"/></svg>
<svg class="a" style="left:16.50px;top:243.00px;" width="12" height="12" viewBox="0 0 12 12"><path d="M11.3 0.8L5.5 7" stroke="#d6d6d6" stroke-width="1.3"/><path d="M4.8 6.6C3 6.5 2 8 2 9.5 1.8 10.5 1 11 0.5 11.3 3 11.5 5.5 10.5 5.8 8z" fill="#d6d6d6"/><path d="M0.5 3.5C1.5 2 3 1.8 4.2 2.4" fill="none" stroke="#d6d6d6" stroke-width="0.9"/><path d="M0.2 2.5l0.5 2 1.7-1z" fill="#d6d6d6"/></svg>
<svg class="a" style="left:29.00px;top:253.00px;" width="2.5" height="2.5" viewBox="0 0 2.5 2.5"><path d="M2.5 0V2.5H0z" fill="#9a9a9a"/></svg>
<svg class="a" style="left:16.50px;top:261.00px;" width="12" height="12" viewBox="0 0 12 12"><path d="M1.5 7.5L7 2 10.5 5.5 6.5 9.5H3.5z" fill="none" stroke="#d6d6d6" stroke-width="1"/><path d="M5 4L7 2 10.5 5.5 8.5 7.5z" fill="#d6d6d6"/><path d="M6.5 9.5H11" stroke="#d6d6d6" stroke-width="0.9"/></svg>
<svg class="a" style="left:29.00px;top:271.00px;" width="2.5" height="2.5" viewBox="0 0 2.5 2.5"><path d="M2.5 0V2.5H0z" fill="#9a9a9a"/></svg>
<div class="a" style="left:17.2px;top:278.3px;width:11.6px;height:10.5px;border:1px solid #d6d6d6;background:linear-gradient(90deg,#3a3a3a,#e8e8e8)"></div>
<svg class="a" style="left:29.00px;top:288.00px;" width="2.5" height="2.5" viewBox="0 0 2.5 2.5"><path d="M2.5 0V2.5H0z" fill="#9a9a9a"/></svg>
<svg class="a" style="left:17.00px;top:294.00px;" width="11" height="12" viewBox="0 0 11 12"><path d="M5.5 0.5C7 3 9.8 5.5 9.8 8 9.8 10.3 7.8 11.8 5.5 11.8 3.2 11.8 1.2 10.3 1.2 8 1.2 5.5 4 3 5.5 0.5z" fill="#d6d6d6"/></svg>
<svg class="a" style="left:29.00px;top:304.50px;" width="2.5" height="2.5" viewBox="0 0 2.5 2.5"><path d="M2.5 0V2.5H0z" fill="#9a9a9a"/></svg>
<svg class="a" style="left:16.50px;top:310.50px;" width="12" height="12" viewBox="0 0 12 12"><circle cx="7" cy="4.8" r="4" fill="#d6d6d6"/><path d="M4.5 7.5L0.8 11.3" stroke="#d6d6d6" stroke-width="1.3"/></svg>
<svg class="a" style="left:29.00px;top:321.00px;" width="2.5" height="2.5" viewBox="0 0 2.5 2.5"><path d="M2.5 0V2.5H0z" fill="#9a9a9a"/></svg>
<svg class="a" style="left:16.50px;top:328.00px;" width="12" height="12" viewBox="0 0 12 12"><path d="M9 0.8L11.2 3 8.5 5.8 10 7 6 10.5 1.2 11 1.7 6 5 2.2 6.2 3.6z" fill="none" stroke="#d6d6d6" stroke-width="1"/><circle cx="5.2" cy="7" r="1" fill="#d6d6d6"/><path d="M1.5 10.8L4.5 7.8" stroke="#d6d6d6" stroke-width="0.7"/></svg>
<svg class="a" style="left:29.00px;top:338.00px;" width="2.5" height="2.5" viewBox="0 0 2.5 2.5"><path d="M2.5 0V2.5H0z" fill="#9a9a9a"/></svg>
<svg class="a" style="left:16.50px;top:344.50px;" width="12" height="12" viewBox="0 0 12 12"><path d="M1 1H11V3.5H10.2L9.8 2.2H7V10.3L8.5 10.6V11.3H3.5V10.6L5 10.3V2.2H2.2L1.8 3.5H1z" fill="#d6d6d6"/></svg>
<svg class="a" style="left:29.00px;top:355.00px;" width="2.5" height="2.5" viewBox="0 0 2.5 2.5"><path d="M2.5 0V2.5H0z" fill="#9a9a9a"/></svg>
<svg class="a" style="left:17.00px;top:362.50px;" width="11" height="12" viewBox="0 0 11 12"><path d="M1 0.5L10 6.5 6 7.2 8.5 11 7 11.8 4.5 8 1.5 10.5z" fill="#1a1a1a" stroke="#d6d6d6" stroke-width="1"/></svg>
<svg class="a" style="left:29.00px;top:372.50px;" width="2.5" height="2.5" viewBox="0 0 2.5 2.5"><path d="M2.5 0V2.5H0z" fill="#9a9a9a"/></svg>
<svg class="a" style="left:16.50px;top:379.00px;" width="12" height="11" viewBox="0 0 12 11"><rect x="0.8" y="0.8" width="10.4" height="9" fill="#6a6a6a" stroke="#d6d6d6" stroke-width="1.1"/></svg>
<svg class="a" style="left:29.00px;top:389.00px;" width="2.5" height="2.5" viewBox="0 0 2.5 2.5"><path d="M2.5 0V2.5H0z" fill="#9a9a9a"/></svg>
<svg class="a" style="left:16.50px;top:395.50px;" width="12" height="12" viewBox="0 0 12 12"><path d="M3 6.5V3C3 2 4.5 2 4.5 3V1.5C4.5 0.5 6 0.5 6 1.5V1.2C6 0.2 7.5 0.2 7.5 1.2V2.3C7.5 1.5 9 1.5 9 2.5V7.5C9 10 7.5 11.5 5.5 11.5 3.8 11.5 3 10.5 2 9L0.8 6.8C0.3 6 1.5 5.2 2.2 6z" fill="#d6d6d6"/></svg>
<svg class="a" style="left:29.00px;top:405.50px;" width="2.5" height="2.5" viewBox="0 0 2.5 2.5"><path d="M2.5 0V2.5H0z" fill="#9a9a9a"/></svg>
<svg class="a" style="left:16.50px;top:412.00px;" width="12" height="12" viewBox="0 0 12 12"><circle cx="5" cy="5" r="3.9" fill="none" stroke="#d6d6d6" stroke-width="1.2"/><path d="M7.8 7.8L11.3 11.3" stroke="#d6d6d6" stroke-width="1.4"/></svg>
<svg class="a" style="left:17.50px;top:435.00px;" width="2.6" height="2.6" viewBox="0 0 2.6 2.6"><circle cx="1.3" cy="1.3" r="1.15" fill="#d6d6d6"/></svg>
<svg class="a" style="left:21.30px;top:435.00px;" width="2.6" height="2.6" viewBox="0 0 2.6 2.6"><circle cx="1.3" cy="1.3" r="1.15" fill="#d6d6d6"/></svg>
<svg class="a" style="left:25.10px;top:435.00px;" width="2.6" height="2.6" viewBox="0 0 2.6 2.6"><circle cx="1.3" cy="1.3" r="1.15" fill="#d6d6d6"/></svg>
<svg class="a" style="left:29.00px;top:440.00px;" width="2.5" height="2.5" viewBox="0 0 2.5 2.5"><path d="M2.5 0V2.5H0z" fill="#9a9a9a"/></svg>
<svg class="a" style="left:16.00px;top:447.50px;" width="5" height="7" viewBox="0 0 5 7"><path d="M0.5 3.5H4.5V6.5H0.5z" fill="#d6d6d6"/><path d="M1.5 3.5V2A1 1 0 0 1 3.5 2V3.5" fill="none" stroke="#d6d6d6" stroke-width="0.8"/></svg>
<svg class="a" style="left:23.50px;top:448.00px;" width="7" height="7" viewBox="0 0 7 7"><path d="M1 1.5H3.5C5 1.5 5.5 2.5 5.5 3.5V5.5" fill="none" stroke="#d6d6d6" stroke-width="0.9"/><path d="M0 1.5L1.8 0V3zM5.5 6.8L4 5H7z" fill="#d6d6d6"/></svg>
<div class="a" style="left:19.10px;top:465.30px;width:11.70px;height:11.70px;background:#ffffff;border:0.6px solid #c8c8c8"></div>
<div class="a" style="left:15.80px;top:459.40px;width:9.20px;height:10.80px;background:#38c5e6;border:0.8px solid #2f2f2f;border-left:none;border-top:none"></div>
<svg class="a" style="left:16.50px;top:484.80px;" width="11.6" height="9.2" viewBox="0 0 11.6 9.2"><rect x="0.6" y="0.6" width="10.4" height="8" fill="none" stroke="#d6d6d6" stroke-width="1"/><circle cx="5.8" cy="4.6" r="2.3" fill="none" stroke="#d6d6d6" stroke-width="1"/></svg>
<div class="a" style="left:833.00px;top:52.50px;width:178.50px;height:7.10px;background:#3d3d3d;"></div>
<svg class="a" style="left:849.50px;top:53.80px;" width="5" height="4" viewBox="0 0 5 4"><path d="M2.2 0.3L0.4 2 2.2 3.7M4.6 0.3L2.8 2 4.6 3.7" fill="none" stroke="#c8c8c8" stroke-width="0.9"/></svg>
<svg class="a" style="left:1004.80px;top:53.80px;" width="5" height="4" viewBox="0 0 5 4"><path d="M0.4 0.3L2.2 2 0.4 3.7M2.8 0.3L4.6 2 2.8 3.7" fill="none" stroke="#c8c8c8" stroke-width="0.9"/></svg>
<div class="a" style="left:833.00px;top:59.60px;width:24.40px;height:26.40px;background:#535353;"></div>
<div class="a" style="left:833.00px;top:87.00px;width:24.40px;height:26.00px;background:#535353;"></div>
<div class="a" style="left:833.00px;top:114.20px;width:24.40px;height:386.00px;background:#535353;"></div>
<svg class="a" style="left:839.00px;top:62.80px;" width="12" height="1" viewBox="0 0 12 1"><path d="M0 0.5H12" stroke="#6e6e6e" stroke-width="1" stroke-dasharray="1 1"/></svg>
<svg class="a" style="left:839.00px;top:89.50px;" width="12" height="1" viewBox="0 0 12 1"><path d="M0 0.5H12" stroke="#6e6e6e" stroke-width="1" stroke-dasharray="1 1"/></svg>
<svg class="a" style="left:840.00px;top:69.00px;" width="12" height="13" viewBox="0 0 12 13"><rect x="1" y="0.8" width="3" height="2.8" fill="none" stroke="#e2e2e2" stroke-width="0.9"/><rect x="1" y="4.8" width="3" height="2.8" fill="none" stroke="#e2e2e2" stroke-width="0.9"/><rect x="0.6" y="8.6" width="3.8" height="3.6" fill="#e2e2e2"/><path d="M7 2.2C9.5 1.5 11 3 10.5 6 10 9 8.5 10.5 6.5 11.3" fill="none" stroke="#e2e2e2" stroke-width="1.1"/><path d="M6.8 0.8L8.8 2.3 6.8 3.8z" fill="#e2e2e2"/></svg>
<svg class="a" style="left:839.50px;top:96.50px;" width="13" height="12" viewBox="0 0 13 12"><path d="M4.2 0.6L7.6 2.4V6.2L4.2 8 0.8 6.2V2.4z" fill="none" stroke="#e2e2e2" stroke-width="0.9"/><path d="M0.8 2.4L4.2 4.2 7.6 2.4M4.2 4.2V8" fill="none" stroke="#e2e2e2" stroke-width="0.7"/><rect x="8.8" y="0.8" width="3" height="2.6" fill="#e2e2e2"/><rect x="8.8" y="4.4" width="3" height="2.6" fill="#e2e2e2"/><rect x="0.6" y="9" width="11.4" height="2.6" fill="#e2e2e2"/></svg>
<div class="a" style="left:859.00px;top:59.60px;width:152.50px;height:129.10px;background:#535353;"></div>
<div class="a" style="left:888.20px;top:59.60px;width:123.30px;height:18.40px;background:#474747;"></div>
<div class="a" style="left:930.00px;top:59.60px;width:1.00px;height:18.40px;background:#424242;"></div>
<div class="t" style="top:66.00px;font-size:7.6px;line-height:7.6px;color:#e8e8e8;font-weight:700;left:865.30px;transform:scaleX(0.79);transform-origin:left center;">Color</div>
<div class="t" style="top:65.00px;font-size:7.2px;line-height:7.2px;color:#b8b8b8;left:893.50px;transform:scaleX(0.89);transform-origin:left center;">Swatches</div>
<svg class="a" style="left:1002.20px;top:66.00px;" width="7" height="5.5" viewBox="0 0 7 5.5"><rect x="0" y="0" width="7" height="5.5" fill="#8a8a8a"/><path d="M0 1.8H7M0 3.7H7" stroke="#5a5a5a" stroke-width="0.6"/></svg>
<div class="a" style="left:871.80px;top:91.60px;width:12.30px;height:12.20px;background:#ffffff;border:0.5px solid #3a3a3a"></div>
<div class="a" style="left:864.00px;top:84.00px;width:14.90px;height:15.00px;background:#38c4e5;border:1.5px solid #707070"></div>
<div class="a" style="left:888.2px;top:82px;width:90.8px;height:93px;background:linear-gradient(to bottom,rgba(0,0,0,0),#000),linear-gradient(to right,#fff,#00d6fb)"></div>
<svg class="a" style="left:953.50px;top:87.80px;" width="9" height="9" viewBox="0 0 9 9"><circle cx="4.5" cy="4.5" r="3.4" fill="none" stroke="#0c2f3a" stroke-width="0.9"/></svg>
<div class="a" style="left:989.5px;top:82px;width:13px;height:93px;background:linear-gradient(to bottom,#ff0000 0%,#ff00ff 16.7%,#0000ff 33.3%,#00ffff 50%,#00ff00 66.7%,#ffff00 83.3%,#ff0000 100%)"></div>
<svg class="a" style="left:984.50px;top:122.50px;" width="4" height="6" viewBox="0 0 4 6"><path d="M0 0L4 3 0 6z" fill="#e8e8e8"/></svg>
<div class="a" style="left:859.00px;top:188.70px;width:152.50px;height:1.80px;background:#3a3a3a;"></div>
<div class="a" style="left:859.00px;top:190.50px;width:152.50px;height:129.50px;background:#535353;"></div>
<div class="a" style="left:859.00px;top:190.50px;width:68.80px;height:18.90px;background:#474747;"></div>
<div class="a" style="left:979.00px;top:190.50px;width:32.50px;height:18.90px;background:#474747;"></div>
<div class="a" style="left:888.00px;top:190.50px;width:1.00px;height:18.90px;background:#424242;"></div>
<div class="t" style="top:197.00px;font-size:7.2px;line-height:7.2px;color:#b8b8b8;left:865.50px;transform:scaleX(0.89);transform-origin:left center;">Learn</div>
<div class="t" style="top:197.00px;font-size:7.2px;line-height:7.2px;color:#b8b8b8;left:894.00px;transform:scaleX(0.89);transform-origin:left center;">Libraries</div>
<div class="t" style="top:197.00px;font-size:7.6px;line-height:7.6px;color:#e8e8e8;font-weight:700;left:934.00px;transform:scaleX(0.79);transform-origin:left center;">Adjustments</div>
<svg class="a" style="left:1002.20px;top:198.00px;" width="7" height="5.5" viewBox="0 0 7 5.5"><rect x="0" y="0" width="7" height="5.5" fill="#8a8a8a"/><path d="M0 1.8H7M0 3.7H7" stroke="#5a5a5a" stroke-width="0.6"/></svg>
<div class="t" style="top:214.00px;font-size:7.6px;line-height:7.6px;color:#d8d8d8;left:865.00px;transform:scaleX(0.89);transform-origin:left center;">Add an adjustment</div>
<svg class="a" style="left:889.50px;top:223.50px;" width="12" height="12" viewBox="0 0 12 12"><circle cx="6" cy="6" r="3.2" fill="none" stroke="#e4e4e4" stroke-width="1"/><path d="M6 2.8A3.2 3.2 0 0 1 6 9.2z" fill="#e4e4e4"/><path d="M6 0V1.8M6 10.2V12M0 6H1.8M10.2 6H12M1.8 1.8L3 3M9 9L10.2 10.2M1.8 10.2L3 9M9 3L10.2 1.8" stroke="#e4e4e4" stroke-width="0.9"/></svg>
<svg class="a" style="left:904.30px;top:224.00px;" width="13" height="11" viewBox="0 0 13 11"><path d="M0.5 10.5V7L1.5 5 2.5 7 3.5 4 4.5 6 5.5 2 6.5 5 7.5 1 8.5 4 9.5 3 10.5 6 11.5 4 12.5 7V10.5z" fill="#e4e4e4"/></svg>
<svg class="a" style="left:921.00px;top:223.80px;" width="12" height="11.5" viewBox="0 0 12 11.5"><rect x="0.5" y="0.5" width="11" height="10.5" fill="none" stroke="#e4e4e4" stroke-width="0.9"/><path d="M4.2 0.5V11M7.8 0.5V11M0.5 4H11.5M0.5 7.5H11.5" stroke="#e4e4e4" stroke-width="0.6"/><path d="M0.5 11L11.5 0.5" stroke="#e4e4e4" stroke-width="1"/></svg>
<svg class="a" style="left:936.80px;top:223.80px;" width="11.5" height="11.5" viewBox="0 0 11.5 11.5"><rect x="0.5" y="0.5" width="10.5" height="10.5" fill="#e4e4e4"/><path d="M0.5 11L11 0.5V11z" fill="#6a6a6a"/><path d="M2 3.5H4.5M3.25 2.2V4.8M6.5 8H9" stroke="#444" stroke-width="0.8"/></svg>
<svg class="a" style="left:953.00px;top:224.00px;" width="11" height="11" viewBox="0 0 11 11"><path d="M0.8 0.8H10.2L5.5 10.2z" fill="none" stroke="#e4e4e4" stroke-width="1.1"/><path d="M4 3.5H7L5.5 6z" fill="#9a9a9a"/></svg>
<svg class="a" style="left:881.60px;top:241.50px;" width="12" height="11" viewBox="0 0 12 11"><rect x="0.5" y="0.5" width="11" height="10" fill="none" stroke="#e4e4e4" stroke-width="0.9"/><rect x="1.5" y="1.5" width="2.5" height="3" fill="#e4e4e4"/><rect x="4.8" y="1.5" width="2.5" height="3" fill="#e4e4e4"/><rect x="8" y="1.5" width="2.5" height="3" fill="#e4e4e4"/></svg>
<div class="a" style="left:883px;top:247px;width:9.2px;height:3.5px;background:linear-gradient(90deg,#333,#eee)"></div>
<svg class="a" style="left:896.60px;top:241.50px;" width="12.5" height="11" viewBox="0 0 12.5 11"><path d="M6.25 1V10M3 2.2H9.5" stroke="#e4e4e4" stroke-width="0.9"/><path d="M0.5 6.5L2.5 2.5 4.5 6.5M8 6.5L10 2.5 12 6.5" fill="none" stroke="#e4e4e4" stroke-width="0.7"/><path d="M0.5 6.5A2 2 0 0 0 4.5 6.5zM8 6.5A2 2 0 0 0 12 6.5z" fill="#e4e4e4"/></svg>
<svg class="a" style="left:913.00px;top:241.50px;" width="11.5" height="11" viewBox="0 0 11.5 11"><rect x="0.5" y="0.5" width="10.5" height="10" fill="#e4e4e4"/><rect x="2" y="2" width="3.5" height="7" fill="#3a3a3a"/></svg>
<svg class="a" style="left:928.70px;top:241.00px;" width="12.5" height="12" viewBox="0 0 12.5 12"><path d="M0.5 3H3L4 1.5H7L8 3H10.5V8.5H0.5z" fill="#e4e4e4"/><circle cx="5.5" cy="5.5" r="1.8" fill="#535353"/><circle cx="9.5" cy="9" r="2.5" fill="#535353" stroke="#e4e4e4" stroke-width="0.9"/></svg>
<svg class="a" style="left:944.60px;top:241.50px;" width="11" height="11" viewBox="0 0 11 11"><circle cx="5.5" cy="3.6" r="3.2" fill="#e4e4e4"/><circle cx="3.5" cy="7" r="3.2" fill="#cfcfcf"/><circle cx="7.5" cy="7" r="3.2" fill="#bdbdbd"/><path d="M3.5 4.8L5.5 8 7.5 4.8z" fill="#555"/></svg>
<svg class="a" style="left:960.00px;top:241.50px;" width="12" height="11" viewBox="0 0 12 11"><rect x="0.5" y="0.5" width="11" height="10" fill="none" stroke="#e4e4e4" stroke-width="0.9"/><path d="M0.5 3.8H11.5M0.5 7.2H11.5M4.1 0.5V10.5M7.8 0.5V10.5" stroke="#e4e4e4" stroke-width="0.9"/></svg>
<svg class="a" style="left:889.00px;top:259.30px;" width="11.5" height="10.5" viewBox="0 0 11.5 10.5"><rect x="0.5" y="0.5" width="10.5" height="9.5" fill="#e4e4e4"/><rect x="1.8" y="1.8" width="7.9" height="6.9" fill="#535353"/><path d="M2.5 8C3 4 6 6 8.5 2" stroke="#ddd" stroke-width="1.2" fill="none"/></svg>
<div class="a" style="left:906.3px;top:260.6px;width:9.4px;height:8px;background:linear-gradient(135deg,#555 20%,#bbb 45%,#555 55%,#aaa 80%)"></div>
<svg class="a" style="left:905.00px;top:259.30px;" width="12" height="10.5" viewBox="0 0 12 10.5"><rect x="0.5" y="0.5" width="11" height="9.5" fill="none" stroke="#e4e4e4" stroke-width="1.2"/></svg>
<div class="a" style="left:922px;top:260.6px;width:9.4px;height:8px;background:linear-gradient(160deg,#ddd 40%,#333 45%,#333 55%,#ddd 60%)"></div>
<svg class="a" style="left:920.80px;top:259.30px;" width="11.7" height="10.5" viewBox="0 0 11.7 10.5"><rect x="0.5" y="0.5" width="10.7" height="9.5" fill="none" stroke="#e4e4e4" stroke-width="1.2"/></svg>
<svg class="a" style="left:936.80px;top:259.30px;" width="11.5" height="10.5" viewBox="0 0 11.5 10.5"><rect x="0.5" y="0.5" width="10.5" height="9.5" fill="#e4e4e4"/><path d="M1.5 1.5L5.75 5.25 1.5 9zM10 1.5L5.75 5.25 10 9z" fill="#6a6a6a"/></svg>
<div class="a" style="left:953.2px;top:260.5px;width:9.6px;height:8.2px;background:linear-gradient(90deg,#222,#eee)"></div>
<svg class="a" style="left:952.00px;top:259.30px;" width="12" height="10.5" viewBox="0 0 12 10.5"><rect x="0.5" y="0.5" width="11" height="9.5" fill="none" stroke="#e4e4e4" stroke-width="1.2"/></svg>
<div class="a" style="left:859.00px;top:320.00px;width:152.50px;height:2.00px;background:#3a3a3a;"></div>
<div class="a" style="left:859.00px;top:322.00px;width:152.50px;height:178.20px;background:#535353;"></div>
<div class="a" style="left:890.40px;top:322.00px;width:121.10px;height:18.00px;background:#474747;"></div>
<div class="a" style="left:929.80px;top:322.00px;width:1.00px;height:18.00px;background:#424242;"></div>
<div class="a" style="left:960.30px;top:322.00px;width:1.00px;height:18.00px;background:#424242;"></div>
<div class="t" style="top:328.00px;font-size:7.6px;line-height:7.6px;color:#e8e8e8;font-weight:700;left:865.50px;transform:scaleX(0.79);transform-origin:left center;">Layers</div>
<div class="t" style="top:328.00px;font-size:7.2px;line-height:7.2px;color:#b8b8b8;left:897.00px;transform:scaleX(0.89);transform-origin:left center;">Channels</div>
<div class="t" style="top:328.00px;font-size:7.2px;line-height:7.2px;color:#b8b8b8;left:937.00px;transform:scaleX(0.89);transform-origin:left center;">Paths</div>
<svg class="a" style="left:1002.20px;top:329.00px;" width="7" height="5.5" viewBox="0 0 7 5.5"><rect x="0" y="0" width="7" height="5.5" fill="#8a8a8a"/><path d="M0 1.8H7M0 3.7H7" stroke="#5a5a5a" stroke-width="0.6"/></svg>
<div class="a" style="left:862.30px;top:347.20px;width:54.70px;height:10.20px;background:#474747;"></div>
<svg class="a" style="left:865.80px;top:348.80px;" width="7" height="7" viewBox="0 0 7 7"><circle cx="2.8" cy="2.8" r="2.1" fill="none" stroke="#e2e2e2" stroke-width="0.9"/><path d="M4.3 4.3L6.5 6.5" stroke="#e2e2e2" stroke-width="1.1"/></svg>
<div class="t" style="top:349.00px;font-size:7px;line-height:7px;color:#e6e6e6;left:875.00px;">Kind</div>
<svg class="a" style="left:910.50px;top:351.20px;" width="5" height="3" viewBox="0 0 5 3"><path d="M0.4 0.4L2.5 2.5 4.6 0.4" fill="none" stroke="#aaa" stroke-width="0.8"/></svg>
<svg class="a" style="left:926.00px;top:348.00px;" width="9" height="8" viewBox="0 0 9 8"><rect x="0.5" y="0.5" width="8" height="7" fill="none" stroke="#e2e2e2" stroke-width="0.9"/><path d="M1.5 6.5L3 4 4.5 5.5 6 3.5 7.5 6.5z" fill="#e2e2e2"/></svg>
<svg class="a" style="left:942.00px;top:348.00px;" width="8" height="8" viewBox="0 0 8 8"><circle cx="4" cy="4" r="3.4" fill="none" stroke="#e2e2e2" stroke-width="0.9"/><path d="M4 0.6A3.4 3.4 0 0 1 4 7.4z" fill="#e2e2e2" transform="rotate(45 4 4)"/></svg>
<svg class="a" style="left:957.80px;top:348.00px;" width="8" height="8" viewBox="0 0 8 8"><path d="M0.5 0.5H7.5V2.5H6.8L6.5 1.5H4.5V6.8L5.5 7V7.6H2.5V7L3.5 6.8V1.5H1.5L1.2 2.5H0.5z" fill="#e2e2e2"/></svg>
<svg class="a" style="left:973.00px;top:347.80px;" width="8.5" height="8.5" viewBox="0 0 8.5 8.5"><rect x="1.5" y="1.5" width="5.5" height="5.5" fill="none" stroke="#e2e2e2" stroke-width="0.9"/><rect x="0" y="0" width="2.6" height="2.6" fill="#e2e2e2"/><rect x="5.9" y="0" width="2.6" height="2.6" fill="#e2e2e2"/><rect x="0" y="5.9" width="2.6" height="2.6" fill="#e2e2e2"/><rect x="5.9" y="5.9" width="2.6" height="2.6" fill="#e2e2e2"/></svg>
<svg class="a" style="left:988.50px;top:348.00px;" width="7" height="8.5" viewBox="0 0 7 8.5"><path d="M2 0.5H5L6.5 2V8H2z" fill="none" stroke="#e2e2e2" stroke-width="0.9"/><rect x="0.3" y="4" width="4" height="4.3" fill="#e2e2e2"/></svg>
<div class="a" style="left:1004.80px;top:346.00px;width:5.80px;height:11.50px;background:#3a3a3a;border-radius:3px"></div>
<svg class="a" style="left:1004.60px;top:345.50px;" width="6.2" height="6.2" viewBox="0 0 6.2 6.2"><circle cx="3.1" cy="3.1" r="2.9" fill="#e8e8e8"/></svg>
<div class="a" style="left:859.00px;top:360.00px;width:152.50px;height:1.00px;background:#4a4a4a;"></div>
<div class="a" style="left:862.00px;top:365.00px;width:80.00px;height:11.00px;background:#4e4e4e;border:0.6px solid #4a4a4a"></div>
<div class="t" style="top:367.00px;font-size:7px;line-height:7px;color:#7b7b7b;left:867.00px;">Normal</div>
<svg class="a" style="left:934.00px;top:369.50px;" width="5" height="3" viewBox="0 0 5 3"><path d="M0.4 0.4L2.5 2.5 4.6 0.4" fill="none" stroke="#6e6e6e" stroke-width="0.7"/></svg>
<div class="t" style="top:367.00px;font-size:7px;line-height:7px;color:#7b7b7b;left:950.00px;">Opacity:</div>
<div class="a" style="left:977.00px;top:365.00px;width:22.00px;height:11.00px;background:#4e4e4e;border:0.6px solid #4a4a4a"></div>
<div class="t" style="top:367.00px;font-size:7px;line-height:7px;color:#6e6e6e;left:979.50px;">100%</div>
<div class="a" style="left:999.50px;top:365.00px;width:9.50px;height:11.00px;background:#4e4e4e;border:0.6px solid #4a4a4a"></div>
<svg class="a" style="left:1002.50px;top:369.50px;" width="5" height="3" viewBox="0 0 5 3"><path d="M0.4 0.4L2.5 2.5 4.6 0.4" fill="none" stroke="#6e6e6e" stroke-width="0.7"/></svg>
<div class="t" style="top:385.00px;font-size:7px;line-height:7px;color:#7b7b7b;left:863.00px;">Lock:</div>
<svg class="a" style="left:885.00px;top:385.00px;" width="7.5" height="7.5" viewBox="0 0 7.5 7.5"><rect x="0.4" y="0.4" width="6.7" height="6.7" fill="none" stroke="#a6a6a6" stroke-width="0.8"/><rect x="1.2" y="1.2" width="1.7" height="1.7" fill="#a6a6a6"/><rect x="4.6" y="1.2" width="1.7" height="1.7" fill="#a6a6a6"/><rect x="2.9" y="2.9" width="1.7" height="1.7" fill="#a6a6a6"/><rect x="1.2" y="4.6" width="1.7" height="1.7" fill="#a6a6a6"/><rect x="4.6" y="4.6" width="1.7" height="1.7" fill="#a6a6a6"/></svg>
<svg class="a" style="left:899.00px;top:384.50px;" width="8.5" height="9" viewBox="0 0 8.5 9"><path d="M8 0.5L3.8 5" stroke="#a6a6a6" stroke-width="1.1"/><path d="M3.3 4.8C2 4.8 1.5 6 1.5 7 1.4 7.8 0.8 8.2 0.4 8.5 2.3 8.6 4 7.8 4.2 6z" fill="#a6a6a6"/></svg>
<svg class="a" style="left:913.00px;top:384.50px;" width="8.5" height="8.5" viewBox="0 0 8.5 8.5"><path d="M4.25 0.5V8M0.5 4.25H8" stroke="#a6a6a6" stroke-width="0.8"/><path d="M4.25 0.2L5.6 1.8H2.9zM4.25 8.3L5.6 6.7H2.9zM0.2 4.25L1.8 2.9V5.6zM8.3 4.25L6.7 2.9V5.6z" fill="#a6a6a6"/></svg>
<svg class="a" style="left:927.00px;top:384.50px;" width="9" height="8" viewBox="0 0 9 8"><rect x="1.5" y="1.8" width="6" height="5.2" fill="none" stroke="#a6a6a6" stroke-width="0.8"/><path d="M0 1.8H2M1.5 0V2M7 7H9M7.5 5.5V8" stroke="#a6a6a6" stroke-width="0.8"/><path d="M5 0.5L8.5 0.5 8.5 3" fill="none" stroke="#a6a6a6" stroke-width="0.6"/></svg>
<svg class="a" style="left:942.00px;top:384.30px;" width="7.5" height="8.5" viewBox="0 0 7.5 8.5"><path d="M1.8 3.8V2.5A2 2 0 0 1 5.8 2.5V3.8" fill="none" stroke="#a6a6a6" stroke-width="1"/><rect x="0.5" y="3.8" width="6.5" height="4.5" fill="#a6a6a6"/></svg>
<div class="t" style="top:385.00px;font-size:7px;line-height:7px;color:#7b7b7b;left:964.00px;">Fill:</div>
<div class="a" style="left:977.00px;top:383.00px;width:22.00px;height:10.50px;background:#4e4e4e;border:0.6px solid #4a4a4a"></div>
<div class="t" style="top:385.00px;font-size:7px;line-height:7px;color:#6e6e6e;left:979.50px;">100%</div>
<div class="a" style="left:999.50px;top:383.00px;width:9.50px;height:10.50px;background:#4e4e4e;border:0.6px solid #4a4a4a"></div>
<svg class="a" style="left:1002.50px;top:387.00px;" width="5" height="3" viewBox="0 0 5 3"><path d="M0.4 0.4L2.5 2.5 4.6 0.4" fill="none" stroke="#6e6e6e" stroke-width="0.7"/></svg>
<div class="a" style="left:859.00px;top:396.50px;width:152.50px;height:1.00px;background:#4a4a4a;"></div>
<div class="a" style="left:859.00px;top:398.90px;width:143.30px;height:79.70px;background:#535353;"></div>
<div class="a" style="left:859.00px;top:398.90px;width:20.30px;height:25.10px;background:#4d4d4d;"></div>
<div class="a" style="left:878.50px;top:398.90px;width:0.80px;height:79.70px;background:#4a4a4a;"></div>
<div class="a" style="left:879.30px;top:398.90px;width:123.00px;height:25.10px;background:#696969;"></div>
<div class="a" style="left:859.00px;top:424.00px;width:143.30px;height:1.00px;background:#4a4a4a;"></div>
<div class="a" style="left:859.00px;top:451.00px;width:143.30px;height:1.00px;background:#4a4a4a;"></div>
<div class="a" style="left:859.00px;top:478.60px;width:143.30px;height:1.00px;background:#4a4a4a;"></div>
<div class="a" style="left:1002.30px;top:397.50px;width:9.20px;height:102.70px;background:#4f4f4f;"></div>
<div class="a" style="left:865.00px;top:408.00px;width:8.50px;height:8.50px;background:transparent;border:0.8px solid #4a4a4a"></div>
<div class="a" style="left:865.00px;top:461.50px;width:8.50px;height:8.50px;background:transparent;border:0.8px solid #4a4a4a"></div>
<svg class="a" style="left:864.50px;top:435.70px;" width="9.5" height="6" viewBox="0 0 9.5 6"><path d="M0.5 3C2 0.8 7.5 0.8 9 3 7.5 5.2 2 5.2 0.5 3z" fill="#e8e8e8"/><circle cx="4.75" cy="3" r="1.5" fill="#535353"/></svg>
<svg class="a" style="left:879.60px;top:400.50px;" width="24" height="23" viewBox="0 0 24 23"><path d="M0.6 5V0.6H6M18 0.6H23.4V5M23.4 18V22.4H18M6 22.4H0.6V18" fill="none" stroke="#d8d8d8" stroke-width="1"/></svg>
<div class="a" style="left:881.70px;top:402.00px;width:20.30px;height:20.00px;background:#38c4e5;"></div>
<div class="a" style="left:881.70px;top:428.50px;width:20.00px;height:20.20px;background:#ffffff;"></div>
<svg class="a" style="left:881.70px;top:428.50px;" width="20" height="20" viewBox="0 0 20 20"><path d="M2.5 13C4 9 8 7.5 10 7 12 7.5 16 9 17.5 13 18 16.5 15 18 10 18 5 18 2 16.5 2.5 13z" fill="#7cc4dc"/><path d="M3 13.5C6 12 14 12 17 13.5 16.5 16.5 14 17.5 10 17.5 6 17.5 3.5 16.5 3 13.5z" fill="#9ad3e6"/><path d="M2.5 4.5L9 8M17.5 4L11 8" stroke="#f5a89a" stroke-width="0.9"/><path d="M8.5 4C7 5 7 8 8.5 9.5 9.5 8 10 6 9.5 4z" fill="#143349"/><path d="M9.5 8.5L11.5 8 12 11 10 11.5z" fill="#f1533b"/><path d="M9.5 11.5L8.5 15.5M11 11.5L12 15.5" stroke="#2d5468" stroke-width="1"/></svg>
<div class="a" style="left:881.70px;top:455.50px;width:20.00px;height:20.20px;background:#ffffff;"></div>
<svg class="a" style="left:881.70px;top:455.50px;" width="20" height="20" viewBox="0 0 20 20"><path d="M2.5 13C4 9 8 7.5 10 7 12 7.5 16 9 17.5 13 18 16.5 15 18 10 18 5 18 2 16.5 2.5 13z" fill="#7cc4dc"/><path d="M3 13.5C6 12 14 12 17 13.5 16.5 16.5 14 17.5 10 17.5 6 17.5 3.5 16.5 3 13.5z" fill="#9ad3e6"/><path d="M2.5 4.5L9 8M17.5 4L11 8" stroke="#f5a89a" stroke-width="0.9"/><path d="M8.5 4C7 5 7 8 8.5 9.5 9.5 8 10 6 9.5 4z" fill="#143349"/><path d="M9.5 8.5L11.5 8 12 11 10 11.5z" fill="#f1533b"/><path d="M9.5 11.5L8.5 15.5M11 11.5L12 15.5" stroke="#2d5468" stroke-width="1"/></svg>
<div class="t" style="top:408.00px;font-size:7.2px;line-height:7.2px;color:#f0f0f0;left:908.60px;transform:scaleX(0.9);transform-origin:left center;">Layer 2</div>
<div class="t" style="top:435.00px;font-size:7.2px;line-height:7.2px;color:#e6e6e6;left:908.60px;transform:scaleX(0.9);transform-origin:left center;">Layer 1</div>
<div class="t" style="top:462.00px;font-size:7.2px;line-height:7.2px;color:#e6e6e6;left:908.60px;transform:scaleX(0.9);transform-origin:left center;font-style:italic;">Background</div>
<svg class="a" style="left:985.20px;top:464.20px;" width="8" height="8.5" viewBox="0 0 8 8.5"><path d="M1.8 3.8V2.6A2.2 2.2 0 0 1 6.2 2.6V3.8" fill="none" stroke="#bdbdbd" stroke-width="1"/><rect x="0.6" y="3.8" width="6.8" height="4.4" rx="0.6" fill="none" stroke="#bdbdbd" stroke-width="0.9"/><rect x="3.5" y="5.3" width="1" height="1.6" fill="#bdbdbd"/></svg>
<div class="a" style="left:35.60px;top:25.10px;width:163.40px;height:368.40px;background:#f0f0f0;box-shadow:1px 1px 1.5px rgba(0,0,0,0.35)"></div>
<div class="a" style="left:37.00px;top:101.20px;width:160.50px;height:1.20px;background:#d3d3d3;"></div>
<div class="a" style="left:37.00px;top:179.40px;width:160.50px;height:1.20px;background:#d3d3d3;"></div>
<div class="a" style="left:37.00px;top:232.70px;width:160.50px;height:1.20px;background:#d3d3d3;"></div>
<div class="a" style="left:37.00px;top:287.00px;width:160.50px;height:1.20px;background:#d3d3d3;"></div>
<div class="a" style="left:37.00px;top:328.80px;width:160.50px;height:1.20px;background:#d3d3d3;"></div>
<div class="a" style="left:37.00px;top:346.40px;width:160.50px;height:1.20px;background:#d3d3d3;"></div>
<div class="a" style="left:37.00px;top:376.70px;width:160.50px;height:1.20px;background:#d3d3d3;"></div>
<div class="a" style="left:37.00px;top:141.30px;width:160.00px;height:11.10px;background:#0f6fd5;"></div>
<div class="t" style="top:28.00px;font-size:8.3px;line-height:8.3px;color:#4f4f4f;left:47.80px;transform:scaleX(0.91);transform-origin:left center;">New…</div>
<div class="t" style="top:28.00px;font-size:8.3px;line-height:8.3px;color:#4e4e4e;right:837.20px;text-align:right;transform:scaleX(0.975);transform-origin:right center;">Ctrl+N</div>
<div class="t" style="top:40.00px;font-size:8.3px;line-height:8.3px;color:#4f4f4f;left:47.80px;transform:scaleX(0.91);transform-origin:left center;">Open…</div>
<div class="t" style="top:40.00px;font-size:8.3px;line-height:8.3px;color:#4e4e4e;right:837.20px;text-align:right;transform:scaleX(0.975);transform-origin:right center;">Ctrl+O</div>
<div class="t" style="top:52.00px;font-size:8.3px;line-height:8.3px;color:#4f4f4f;left:47.80px;transform:scaleX(0.91);transform-origin:left center;">Browse in Bridge…</div>
<div class="t" style="top:52.00px;font-size:8.3px;line-height:8.3px;color:#4e4e4e;right:837.20px;text-align:right;transform:scaleX(0.975);transform-origin:right center;">Alt+Ctrl+O</div>
<div class="t" style="top:64.00px;font-size:8.3px;line-height:8.3px;color:#4f4f4f;left:47.80px;transform:scaleX(0.91);transform-origin:left center;">Open As…</div>
<div class="t" style="top:64.00px;font-size:8.3px;line-height:8.3px;color:#4e4e4e;right:837.20px;text-align:right;transform:scaleX(0.975);transform-origin:right center;">Alt+Shift+Ctrl+O</div>
<div class="t" style="top:77.00px;font-size:8.3px;line-height:8.3px;color:#4f4f4f;left:47.80px;transform:scaleX(0.91);transform-origin:left center;">Open as Smart Object…</div>
<div class="t" style="top:89.00px;font-size:8.3px;line-height:8.3px;color:#4f4f4f;left:47.80px;transform:scaleX(0.91);transform-origin:left center;">Open Recent</div>
<svg class="a" style="left:191.60px;top:90.60px;" width="3.5" height="5.4" viewBox="0 0 3.5 5.4"><path d="M0 0L3.5 2.7 0 5.4z" fill="#1b1b1b"/></svg>
<div class="t" style="top:106.00px;font-size:8.3px;line-height:8.3px;color:#4f4f4f;left:47.80px;transform:scaleX(0.91);transform-origin:left center;">Close</div>
<div class="t" style="top:106.00px;font-size:8.3px;line-height:8.3px;color:#4e4e4e;right:837.20px;text-align:right;transform:scaleX(0.975);transform-origin:right center;">Ctrl+W</div>
<div class="t" style="top:119.00px;font-size:8.3px;line-height:8.3px;color:#4f4f4f;left:47.80px;transform:scaleX(0.91);transform-origin:left center;">Close All</div>
<div class="t" style="top:119.00px;font-size:8.3px;line-height:8.3px;color:#4e4e4e;right:837.20px;text-align:right;transform:scaleX(0.975);transform-origin:right center;">Alt+Ctrl+W</div>
<div class="t" style="top:130.00px;font-size:8.3px;line-height:8.3px;color:#4f4f4f;left:47.80px;transform:scaleX(0.91);transform-origin:left center;">Close and Go to Bridge…</div>
<div class="t" style="top:130.00px;font-size:8.3px;line-height:8.3px;color:#4e4e4e;right:837.20px;text-align:right;transform:scaleX(0.975);transform-origin:right center;">Shift+Ctrl+W</div>
<div class="t" style="top:142.00px;font-size:8.3px;line-height:8.3px;color:#f4f8ff;left:47.80px;transform:scaleX(0.91);transform-origin:left center;">Save</div>
<div class="t" style="top:142.00px;font-size:8.3px;line-height:8.3px;color:#f4f8ff;right:837.20px;text-align:right;transform:scaleX(0.975);transform-origin:right center;">Ctrl+S</div>
<div class="t" style="top:155.00px;font-size:8.3px;line-height:8.3px;color:#4f4f4f;left:47.80px;transform:scaleX(0.91);transform-origin:left center;">Save As…</div>
<div class="t" style="top:155.00px;font-size:8.3px;line-height:8.3px;color:#4e4e4e;right:837.20px;text-align:right;transform:scaleX(0.975);transform-origin:right center;">Shift+Ctrl+S</div>
<div class="t" style="top:166.00px;font-size:8.3px;line-height:8.3px;color:#4f4f4f;left:47.80px;transform:scaleX(0.91);transform-origin:left center;">Revert</div>
<div class="t" style="top:166.00px;font-size:8.3px;line-height:8.3px;color:#4e4e4e;right:837.20px;text-align:right;transform:scaleX(0.975);transform-origin:right center;">F12</div>
<div class="t" style="top:184.00px;font-size:8.3px;line-height:8.3px;color:#4f4f4f;left:47.80px;transform:scaleX(0.91);transform-origin:left center;">Export</div>
<svg class="a" style="left:191.60px;top:185.90px;" width="3.5" height="5.4" viewBox="0 0 3.5 5.4"><path d="M0 0L3.5 2.7 0 5.4z" fill="#1b1b1b"/></svg>
<div class="t" style="top:197.00px;font-size:8.3px;line-height:8.3px;color:#4f4f4f;left:47.80px;transform:scaleX(0.91);transform-origin:left center;">Generate</div>
<svg class="a" style="left:191.60px;top:198.50px;" width="3.5" height="5.4" viewBox="0 0 3.5 5.4"><path d="M0 0L3.5 2.7 0 5.4z" fill="#1b1b1b"/></svg>
<div class="t" style="top:208.00px;font-size:8.3px;line-height:8.3px;color:#4f4f4f;left:47.80px;transform:scaleX(0.91);transform-origin:left center;">Share…</div>
<div class="t" style="top:221.00px;font-size:8.3px;line-height:8.3px;color:#4f4f4f;left:47.80px;transform:scaleX(0.91);transform-origin:left center;">Share on Behance…</div>
<div class="t" style="top:238.00px;font-size:8.3px;line-height:8.3px;color:#4f4f4f;left:47.80px;transform:scaleX(0.91);transform-origin:left center;">Search Adobe Stock…</div>
<div class="t" style="top:250.00px;font-size:8.3px;line-height:8.3px;color:#4f4f4f;left:47.80px;transform:scaleX(0.91);transform-origin:left center;">Place Embedded…</div>
<div class="t" style="top:262.00px;font-size:8.3px;line-height:8.3px;color:#4f4f4f;left:47.80px;transform:scaleX(0.91);transform-origin:left center;">Place Linked…</div>
<div class="t" style="top:274.00px;font-size:8.3px;line-height:8.3px;color:#a9a9a9;left:47.80px;transform:scaleX(0.91);transform-origin:left center;">Package…</div>
<div class="t" style="top:293.00px;font-size:8.3px;line-height:8.3px;color:#4f4f4f;left:47.80px;transform:scaleX(0.91);transform-origin:left center;">Automate</div>
<svg class="a" style="left:191.60px;top:294.00px;" width="3.5" height="5.4" viewBox="0 0 3.5 5.4"><path d="M0 0L3.5 2.7 0 5.4z" fill="#1b1b1b"/></svg>
<div class="t" style="top:305.00px;font-size:8.3px;line-height:8.3px;color:#4f4f4f;left:47.80px;transform:scaleX(0.91);transform-origin:left center;">Scripts</div>
<svg class="a" style="left:191.60px;top:306.30px;" width="3.5" height="5.4" viewBox="0 0 3.5 5.4"><path d="M0 0L3.5 2.7 0 5.4z" fill="#1b1b1b"/></svg>
<div class="t" style="top:317.00px;font-size:8.3px;line-height:8.3px;color:#4f4f4f;left:47.80px;transform:scaleX(0.91);transform-origin:left center;">Import</div>
<svg class="a" style="left:191.60px;top:318.30px;" width="3.5" height="5.4" viewBox="0 0 3.5 5.4"><path d="M0 0L3.5 2.7 0 5.4z" fill="#1b1b1b"/></svg>
<div class="t" style="top:334.00px;font-size:8.3px;line-height:8.3px;color:#4f4f4f;left:47.80px;transform:scaleX(0.91);transform-origin:left center;">File Info…</div>
<div class="t" style="top:334.00px;font-size:8.3px;line-height:8.3px;color:#4e4e4e;right:837.20px;text-align:right;transform:scaleX(0.975);transform-origin:right center;">Alt+Shift+Ctrl+I</div>
<div class="t" style="top:352.00px;font-size:8.3px;line-height:8.3px;color:#4f4f4f;left:47.80px;transform:scaleX(0.91);transform-origin:left center;">Print…</div>
<div class="t" style="top:352.00px;font-size:8.3px;line-height:8.3px;color:#4e4e4e;right:837.20px;text-align:right;transform:scaleX(0.975);transform-origin:right center;">Ctrl+P</div>
<div class="t" style="top:364.00px;font-size:8.3px;line-height:8.3px;color:#4f4f4f;left:47.80px;transform:scaleX(0.91);transform-origin:left center;">Print One Copy</div>
<div class="t" style="top:364.00px;font-size:8.3px;line-height:8.3px;color:#4e4e4e;right:837.20px;text-align:right;transform:scaleX(0.975);transform-origin:right center;">Alt+Shift+Ctrl+P</div>
<div class="t" style="top:381.00px;font-size:8.3px;line-height:8.3px;color:#4f4f4f;left:47.80px;transform:scaleX(0.91);transform-origin:left center;">Exit</div>
<div class="t" style="top:381.00px;font-size:8.3px;line-height:8.3px;color:#4e4e4e;right:837.20px;text-align:right;transform:scaleX(0.975);transform-origin:right center;">Ctrl+Q</div>
</body></html>
